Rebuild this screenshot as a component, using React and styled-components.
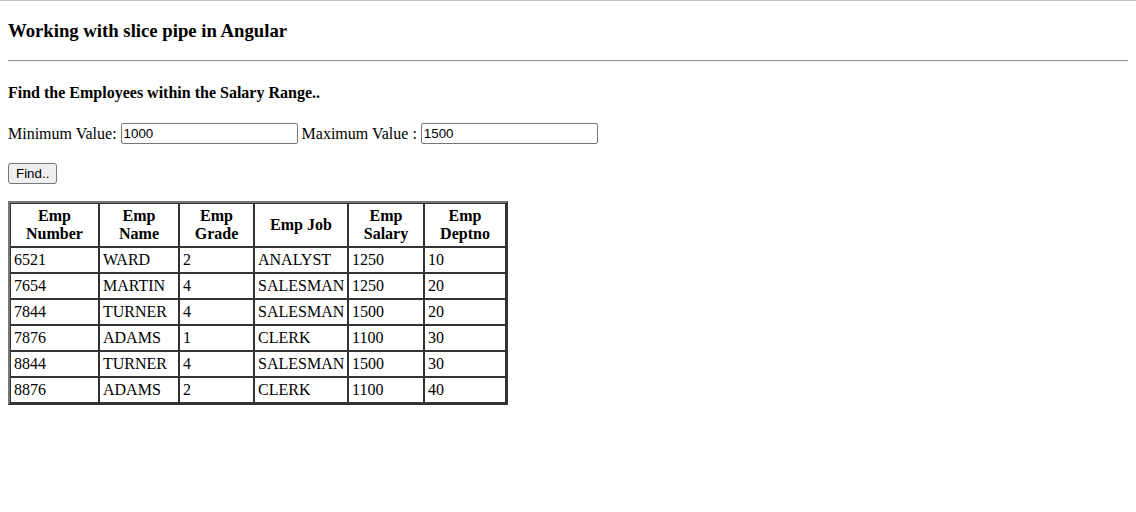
import styled, { createGlobalStyle } from "styled-components";

const GlobalStyle=createGlobalStyle`
    html{
        border-top: 1px solid #c3c3c3;
        background: #ffffff;
    }
    body{
        margin: 0 8px 8px 8px;
        font-family: 'Liberation Serif', 'Times New Roman', serif;
        font-size: 16px;
        color: #000000;
    }
`;

const employees=[
    {no:'6521',name:'WARD',grade:'2',job:'ANALYST',sal:'1250',dept:'10'},
    {no:'7654',name:'MARTIN',grade:'4',job:'SALESMAN',sal:'1250',dept:'20'},
    {no:'7844',name:'TURNER',grade:'4',job:'SALESMAN',sal:'1500',dept:'20'},
    {no:'7876',name:'ADAMS',grade:'1',job:'CLERK',sal:'1100',dept:'30'},
    {no:'8844',name:'TURNER',grade:'4',job:'SALESMAN',sal:'1500',dept:'30'},
    {no:'8876',name:'ADAMS',grade:'2',job:'CLERK',sal:'1100',dept:'40'},
];

const columns=[
    {label:<>Emp<br/>Number</>,width:89},
    {label:<>Emp<br/>Name</>,width:80},
    {label:<>Emp<br/>Grade</>,width:75},
    {label:'Emp Job',width:94},
    {label:<>Emp<br/>Salary</>,width:76},
    {label:<>Emp<br/>Deptno</>,width:82},
];

export default function App(){
    return(
        <>
            <GlobalStyle/>
            <Title>Working with slice pipe in Angular</Title>
            <Rule/>
            <SubTitle>Find the Employees within the Salary Range..</SubTitle>
            <Form>
                Minimum Value: <Input defaultValue="1000"/> Maximum Value : <Input defaultValue="1500"/>
            </Form>
            <Find>Find..</Find>
            <Table>
                <colgroup>
                    {columns.map((c,i)=>(<col key={i} style={{width:c.width}}/>))}
                </colgroup>
                <thead>
                    <tr>
                        {columns.map((c,i)=>(<Head key={i}>{c.label}</Head>))}
                    </tr>
                </thead>
                <tbody>
                    {employees.map((e,index)=>(
                        <tr key={index}>
                            <Cell>{e.no}</Cell>
                            <Cell>{e.name}</Cell>
                            <Cell>{e.grade}</Cell>
                            <Cell>{e.job}</Cell>
                            <Cell>{e.sal}</Cell>
                            <Cell>{e.dept}</Cell>
                        </tr>
                    ))}
                </tbody>
            </Table>
        </>
    );
}

const Title=styled.h3`
    font-size: 18.72px;
    font-weight: 700;
    margin: 18.72px 0;
`;

const Rule=styled.hr`
    margin: 8px 0;
    border: none;
    border-top: 1px solid #9a9a9a;
    border-bottom: 1px solid #eeeeee;
    height: 0;
`;

const SubTitle=styled.h4`
    font-size: 16px;
    font-weight: 700;
    margin: 21.28px 0;
`;

const Form=styled.p`
    margin: 16px 0 19px;
    line-height: 21px;
`;

const Input=styled.input`
    font-family: 'Liberation Sans', Arial, sans-serif;
    font-size: 13.33px;
    width: 177px;
    height: 21px;
    box-sizing: border-box;
    padding: 1px 2px;
    border: 1px solid #767676;
    border-radius: 2px;
    color: #000000;
    vertical-align: 1px;
    outline: none;
`;

const Find=styled.button`
    display: block;
    font-family: 'Liberation Sans', Arial, sans-serif;
    font-size: 13.33px;
    height: 21px;
    padding: 1px 7px;
    background: #efefef;
    border: 1px solid #767676;
    border-radius: 3px;
    color: #000000;
    margin-bottom: 17px;
`;

const Table=styled.table`
    table-layout: fixed;
    width: 500px;
    border-collapse: separate;
    border-spacing: 0;
    border: 2px solid;
    border-color: #777777 #333333 #333333 #777777;
`;

const Head=styled.th`
    border: 1px solid #333333;
    padding: 2px 3px;
    height: 38px;
    font-weight: 700;
    line-height: 18px;
    text-align: center;
`;

const Cell=styled.td`
    border: 1px solid #333333;
    padding: 3px 3px;
    height: 18px;
    line-height: 18px;
    text-align: left;
    white-space: nowrap;
`;
